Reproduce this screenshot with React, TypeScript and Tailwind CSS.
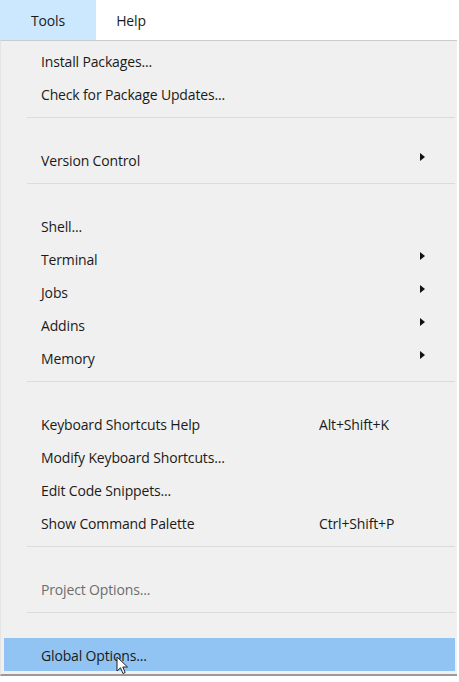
import React from 'react';

type Item =
  | { kind: 'item'; label: string; shortcut?: string; submenu?: boolean; disabled?: boolean; active?: boolean }
  | { kind: 'sep' };

const items: Item[] = [
  { kind: 'item', label: 'Install Packages...' },
  { kind: 'item', label: 'Check for Package Updates...' },
  { kind: 'sep' },
  { kind: 'item', label: 'Version Control', submenu: true },
  { kind: 'sep' },
  { kind: 'item', label: 'Shell...' },
  { kind: 'item', label: 'Terminal', submenu: true },
  { kind: 'item', label: 'Jobs', submenu: true },
  { kind: 'item', label: 'Addins', submenu: true },
  { kind: 'item', label: 'Memory', submenu: true },
  { kind: 'sep' },
  { kind: 'item', label: 'Keyboard Shortcuts Help', shortcut: 'Alt+Shift+K' },
  { kind: 'item', label: 'Modify Keyboard Shortcuts...' },
  { kind: 'item', label: 'Edit Code Snippets...' },
  { kind: 'item', label: 'Show Command Palette', shortcut: 'Ctrl+Shift+P' },
  { kind: 'sep' },
  { kind: 'item', label: 'Project Options...', disabled: true },
  { kind: 'sep' },
  { kind: 'item', label: 'Global Options...', active: true },
];

function Arrow() {
  return (
    <svg width="5" height="8" viewBox="0 0 5 8" className="block">
      <path d="M0 0 L5 4 L0 8 Z" fill="#111" />
    </svg>
  );
}

function Cursor() {
  return (
    <svg width="13" height="20" viewBox="0 0 13 20" className="absolute left-[116px] top-[656px]">
      <path d="M1 1 L1 15 L4.5 11.8 L7 17.5 L9.2 16.5 L6.8 11 L11.5 11 Z" fill="#fff" stroke="#222" strokeWidth="1" strokeLinejoin="round" />
    </svg>
  );
}

export default function App() {
  return (
    <div
      className="relative w-[459px] h-[682px] bg-white overflow-hidden text-[#1a1a1a] tracking-[-0.15px]"
      style={{ fontFamily: '"Open Sans", "Noto Sans", sans-serif' }}
    >
      {/* Menu bar */}
      <div className="flex h-[40px] text-[14px]">
        <div className="w-[96px] flex items-center justify-center bg-[#cce8ff]">Tools</div>
        <div className="w-[70px] flex items-center justify-center">Help</div>
      </div>

      {/* Dropdown */}
      <div className="w-[457px] h-[636px] bg-[#f0f0f0] border-t border-t-[#cbcbcb] border-l border-l-[#e4e4e4] border-b-2 border-b-[#9a9a9a] pl-[3px] pr-[2px] pt-[3px] text-[14px]">
        {items.map((it, i) =>
          it.kind === 'sep' ? (
            <div key={i} className="h-[33px] pt-[7px] pl-[23px]">
              <div className="h-px bg-[#dcdcdc]" />
            </div>
          ) : (
            <div
              key={i}
              className={`h-[33px] flex items-center pl-[37px] pt-[1px] ${it.active ? 'bg-[#91c4f2]' : ''} ${it.disabled ? 'text-[#6d6d6d]' : ''}`}
            >
              <span className="w-[278px]">{it.label}</span>
              {it.shortcut && <span>{it.shortcut}</span>}
              {it.submenu && (
                <span className="ml-[101px] -mt-[7px]">
                  <Arrow />
                </span>
              )}
            </div>
          )
        )}
      </div>
      <Cursor />
    </div>
  );
}
